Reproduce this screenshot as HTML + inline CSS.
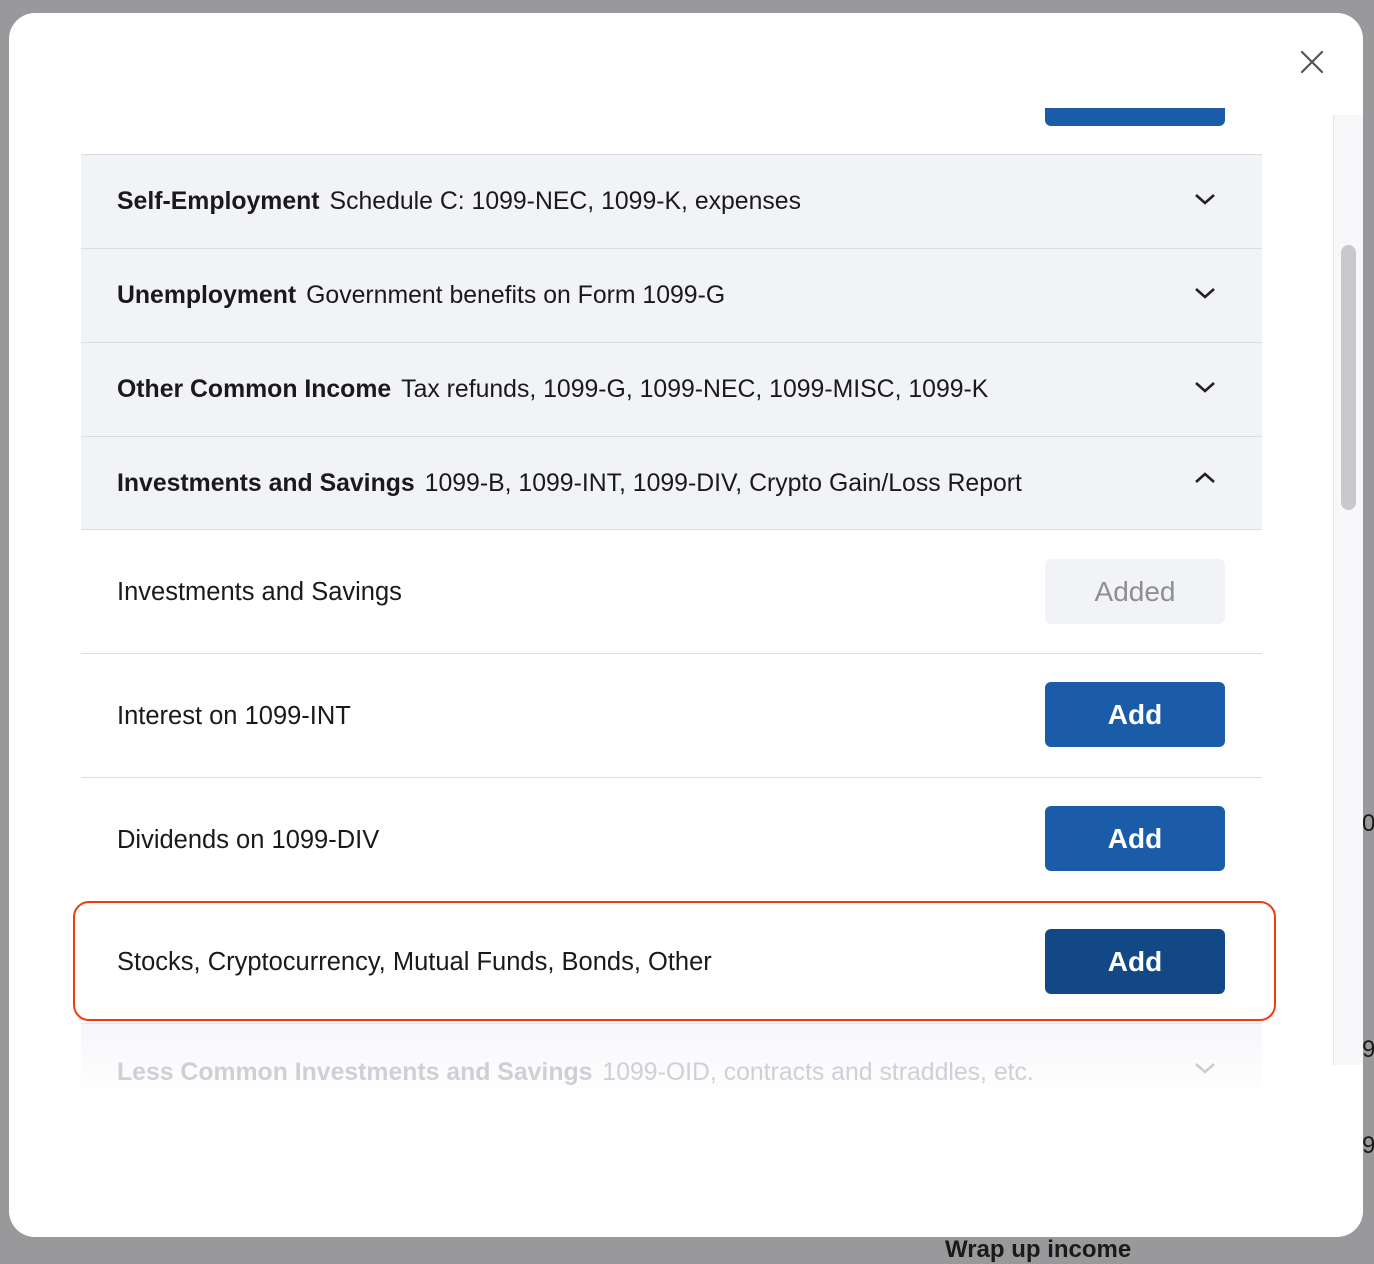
<!DOCTYPE html>
<html><head><style>
*{box-sizing:border-box;margin:0;padding:0}
body{width:1374px;height:1248px;background:#99989b;position:relative;overflow:hidden;font-family:"Liberation Sans",sans-serif;color:#1a1a1a}
.modal{position:absolute;left:9px;top:13px;width:1354px;height:1224px;background:#fff;border-radius:26px;overflow:hidden}
.x{position:absolute;left:1281px;top:27px;width:44px;height:44px}
.track{position:absolute;left:1324px;top:102px;width:30px;height:950px;background:#f8f8fa;border-left:1px solid #e6e6ea}
.thumb{position:absolute;left:1332px;top:232px;width:15px;height:265px;background:#c9c9cc;border-radius:8px}
.topbtn{position:absolute;left:1036px;top:95px;width:180px;height:18px;background:#1a5ca8;border-radius:0 0 6px 6px}
.hdr{position:absolute;left:72px;width:1181px;height:94px;background:#f2f3f7;border-top:1px solid #dcdde3;font-size:24.8px;line-height:94px;padding-left:36px;white-space:nowrap}
.hdr b{font-weight:bold;margin-right:10px}
.chev{position:absolute;right:46px;top:37px}
.row{position:absolute;left:72px;width:1181px;height:124px;border-top:1px solid #dcdde3;font-size:25.5px;line-height:124px;padding-left:36px}
.btn{position:absolute;left:964px;top:29px;width:180px;height:65px;border-radius:6px;background:#1a5ca8;color:#fff;font-size:28px;font-weight:bold;line-height:65px;text-align:center}
.fade{position:absolute;left:72px;top:1010px;width:1181px;height:80px;background:linear-gradient(#f7f7fb,#fff);font-size:24.8px;line-height:97px;padding-left:36px;color:#cfcfd6;white-space:nowrap;border-top:1px solid #e6e7ec}
.fade b{margin-right:10px}
.red{position:absolute;left:64px;top:888px;width:1203px;height:120px;border:2px solid #f03c14;border-radius:16px}
.bg2{position:absolute;font-size:24px;color:#1a1a1a}
</style></head><body>
<div class="bg2" style="left:1362px;top:810px">0</div>
<div class="bg2" style="left:1362px;top:1036px">9</div>
<div class="bg2" style="left:1362px;top:1132px">9</div>
<div class="bg2" style="left:945px;top:1236px;font-weight:bold">Wrap up income</div>
<div class="modal">
<svg class="x" viewBox="0 0 44 44"><path d="M12 12L32 32M32 12L12 32" stroke="#555" stroke-width="2.2" stroke-linecap="round"/></svg>
<div class="topbtn"></div>
<div class="track"></div><div class="thumb"></div>
<div class="hdr" style="top:141px"><b>Self-Employment</b>Schedule C: 1099-NEC, 1099-K, expenses<svg class="chev" width="22" height="14" viewBox="0 0 22 14"><path d="M2 3L11 11L20 3" fill="none" stroke="#222" stroke-width="2.6"/></svg></div>
<div class="hdr" style="top:235px"><b>Unemployment</b>Government benefits on Form 1099-G<svg class="chev" width="22" height="14" viewBox="0 0 22 14"><path d="M2 3L11 11L20 3" fill="none" stroke="#222" stroke-width="2.6"/></svg></div>
<div class="hdr" style="top:329px"><b>Other Common Income</b>Tax refunds, 1099-G, 1099-NEC, 1099-MISC, 1099-K<svg class="chev" width="22" height="14" viewBox="0 0 22 14"><path d="M2 3L11 11L20 3" fill="none" stroke="#222" stroke-width="2.6"/></svg></div>
<div class="hdr" style="top:423px;border-bottom:1px solid #dcdde3;height:94px"><b>Investments and Savings</b>1099-B, 1099-INT, 1099-DIV, Crypto Gain/Loss Report<svg class="chev" width="22" height="14" viewBox="0 0 22 14" style="top:34px"><path d="M2 11L11 3L20 11" fill="none" stroke="#222" stroke-width="2.6"/></svg></div>
<div class="row" style="top:517px;border-top:none">Investments and Savings<div class="btn" style="background:#f2f3f7;color:#8e8e93;font-weight:normal;top:29px">Added</div></div>
<div class="row" style="top:640px">Interest on 1099-INT<div class="btn" style="top:28px">Add</div></div>
<div class="row" style="top:764px">Dividends on 1099-DIV<div class="btn" style="top:28px">Add</div></div>
<div class="row" style="top:887px;border-top:none">Stocks, Cryptocurrency, Mutual Funds, Bonds, Other<div class="btn" style="top:29px;background:#134886">Add</div></div>
<div class="red"></div>
<div class="fade"><b>Less Common Investments and Savings</b>1099-OID, contracts and straddles, etc.<svg style="position:absolute;right:46px;top:37px" width="22" height="14" viewBox="0 0 22 14"><path d="M2 3L11 11L20 3" fill="none" stroke="#ccc" stroke-width="2.6"/></svg></div>
</div>
</body></html>
